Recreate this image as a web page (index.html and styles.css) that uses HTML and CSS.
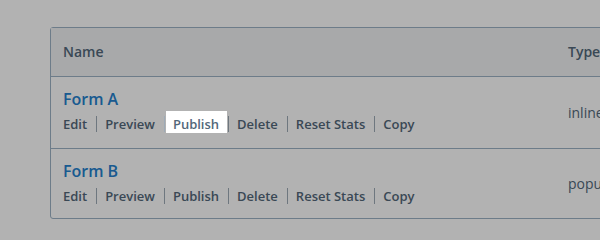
FILE: index.html
```html
<!DOCTYPE html>
<html lang="en">
<head>
<meta charset="utf-8">
<title>Forms</title>
<link rel="stylesheet" href="styles.css">
</head>
<body>
<div class="page">
  <table class="forms">
    <colgroup>
      <col class="col-name">
      <col class="col-type">
    </colgroup>
    <thead>
      <tr>
        <th>Name</th>
        <th>Type</th>
      </tr>
    </thead>
    <tbody>
      <tr class="row row-first">
        <td>
          <a class="title" href="#">Form A</a>
          <div class="actions">
            <a href="#">Edit</a><a href="#">Preview</a><a href="#" class="highlight">Publish</a><a href="#">Delete</a><a href="#">Reset Stats</a><a href="#">Copy</a>
          </div>
        </td>
        <td class="type">inline</td>
      </tr>
      <tr class="row">
        <td>
          <a class="title" href="#">Form B</a>
          <div class="actions">
            <a href="#">Edit</a><a href="#">Preview</a><a href="#">Publish</a><a href="#">Delete</a><a href="#">Reset Stats</a><a href="#">Copy</a>
          </div>
        </td>
        <td class="type">popup</td>
      </tr>
    </tbody>
  </table>
</div>
<div class="overlay"></div>
</body>
</html>
```
FILE: styles.css
```css
html, body {
  margin: 0;
  padding: 0;
  background: #ffffff;
  overflow: hidden;
}

body {
  font-family: "Open Sans", "Liberation Sans", sans-serif;
  color: #53687a;
  width: 600px;
  height: 237px;
}

.page {
  padding: 27px 0 0 50px;
}

.forms {
  width: 660px;
  table-layout: fixed;
  border-collapse: separate;
  border-spacing: 0;
  border: 1px solid #9db2c4;
  border-radius: 3px;
}

.col-name { width: 505px; }
.col-type { width: 155px; }

.forms th {
  background: #f1f3f4;
  text-align: left;
  font-size: 14px;
  font-weight: 600;
  line-height: 20px;
  padding: 14px 12px 14px 12px;
  border-bottom: 1px solid #9db2c4;
  color: #53687a;
}

.forms td {
  padding: 10px 12px 12px 12px;
  vertical-align: top;
}

.forms .row-first td {
  padding-bottom: 14px;
  border-bottom: 1px solid #9db2c4;
}

.forms td.type {
  vertical-align: middle;
  font-size: 14px;
  line-height: 20px;
  padding-top: 0;
  padding-bottom: 0;
  color: #53687a;
}

.title {
  display: block;
  font-size: 16px;
  font-weight: 600;
  line-height: 24px;
  color: #2581ce;
  text-decoration: none;
}

.actions {
  margin-top: 3px;
  font-size: 13px;
  font-weight: 600;
  line-height: 20px;
  white-space: nowrap;
}

.actions a {
  color: #53687a;
  text-decoration: none;
}

.actions a + a::before {
  content: "";
  display: inline-block;
  width: 1px;
  height: 16px;
  margin: 0 8px 0 9px;
  vertical-align: -3px;
  background: #9eabb7;
}

.actions a.highlight {
  position: relative;
  z-index: 3;
}

.actions a.highlight::after {
  content: "";
  position: absolute;
  top: -4px;
  bottom: 0;
  left: 11px;
  right: -8px;
  background: #ffffff;
  z-index: -1;
}

.overlay {
  position: fixed;
  inset: 0;
  background: rgba(0, 0, 0, 0.3);
  z-index: 2;
}
```
